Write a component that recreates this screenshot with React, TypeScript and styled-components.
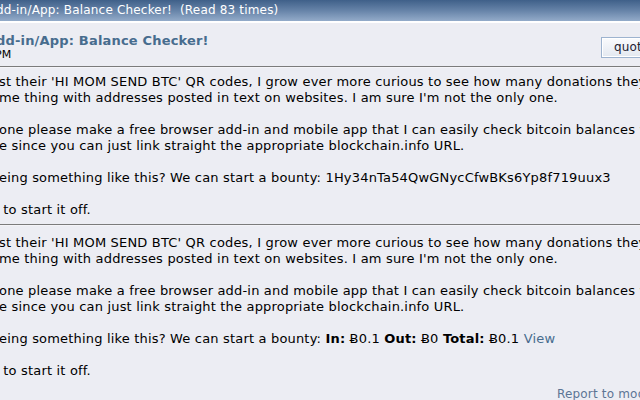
import React from "react";
import styled, { createGlobalStyle } from "styled-components";

const Global = createGlobalStyle`
  html, body {
    margin: 0;
    padding: 0;
    overflow: hidden;
    background: #ecedf3;
    font-family: "DejaVu Sans", Verdana, sans-serif;
  }
`;

const Page = styled.div`
  width: 640px;
  height: 400px;
  overflow: hidden;
  background: #ecedf3;
  letter-spacing: 0.18px;
`;

const CatBar = styled.div`
  height: 21px;
  line-height: 20px;
  margin-left: -4px;
  color: #fff;
  font-size: 12px;
  white-space: nowrap;
  background: linear-gradient(to bottom, #3f6089 0%, #6683a8 50%, #93abc9 100%);
  border-bottom: 2px solid #fff;
`;

const PostHead = styled.div`
  display: flex;
  justify-content: space-between;
  align-items: flex-start;
  padding-top: 9px;
  height: 34px;
`;

const TitleBlock = styled.div`
  display: flex;
  flex-direction: column;
  margin-left: -4px;
`;

const Subject = styled.div`
  color: #476c8e;
  font-weight: bold;
  font-size: 13px;
  line-height: 17px;
  white-space: nowrap;
`;

const PostDate = styled.div`
  font-size: 11px;
  line-height: 12px;
  color: #000;
  margin-left: -1px;
`;

const QuoteButton = styled.div`
  margin-top: 5px;
  margin-right: -51px;
  width: 76px;
  height: 19px;
  border: 1px solid #9db3cf;
  box-shadow: inset 0 0 0 1px #fff;
  background: linear-gradient(to bottom, #fafbfd, #e3e8f0);
  font-size: 12px;
  line-height: 19px;
  color: #223;
  padding-left: 12px;
  box-sizing: content-box;
`;

const Rule = styled.hr`
  margin: 0;
  border: none;
  height: 1px;
  background: #7b7b7b;
  border-bottom: 1px solid #f4f4f8;
`;

const Body = styled.div<{ pad: number }>`
  font-size: 13px;
  line-height: 16px;
  color: #000;
  white-space: nowrap;
  padding-top: ${({ pad }) => pad}px;
  margin-left: -1px;
`;

const Gap = styled.div`
  height: 16px;
`;

const Bold = styled.b``;

const ViewLink = styled.span`
  color: #476c8e;
`;

const Footer = styled.div`
  display: flex;
  padding-top: 8px;
  padding-left: 557px;
  font-size: 12px;
  color: #5d7595;
  white-space: nowrap;
`;

const Text = ({ bounty }: { bounty: React.ReactNode }) => (
  <>
    <div>st their 'HI MOM SEND BTC' QR codes, I grow ever more curious to see how many donations they receive.</div>
    <div>me thing with addresses posted in text on websites. I am sure I'm not the only one.</div>
    <Gap />
    <div>one please make a free browser add-in and mobile app that I can easily check bitcoin balances with?</div>
    <div>e since you can just link straight the appropriate blockchain.info URL.</div>
    <Gap />
    <div>eing something like this? We can start a bounty: {bounty}</div>
    <Gap />
    <div>&nbsp;to start it off.</div>
  </>
);

export default function App() {
  return (
    <Page>
      <Global />
      <CatBar>dd-in/App: Balance Checker!&nbsp; (Read 83 times)</CatBar>
      <PostHead>
        <TitleBlock>
          <Subject>dd-in/App: Balance Checker!</Subject>
          <PostDate>PM</PostDate>
        </TitleBlock>
        <QuoteButton>quote</QuoteButton>
      </PostHead>
      <Rule />
      <Body pad={6}>
        <Text bounty="1Hy34nTa54QwGNycCfwBKs6Yp8f719uux3" />
      </Body>
      <Body pad={6}>
        <Rule />
      </Body>
      <Body pad={9}>
        <Text
          bounty={
            <>
              <Bold>In:</Bold> Ƀ0.1 <Bold>Out:</Bold> Ƀ0 <Bold>Total:</Bold> Ƀ0.1{" "}
              <ViewLink>View</ViewLink>
            </>
          }
        />
      </Body>
      <Footer>Report to moderator</Footer>
    </Page>
  );
}
